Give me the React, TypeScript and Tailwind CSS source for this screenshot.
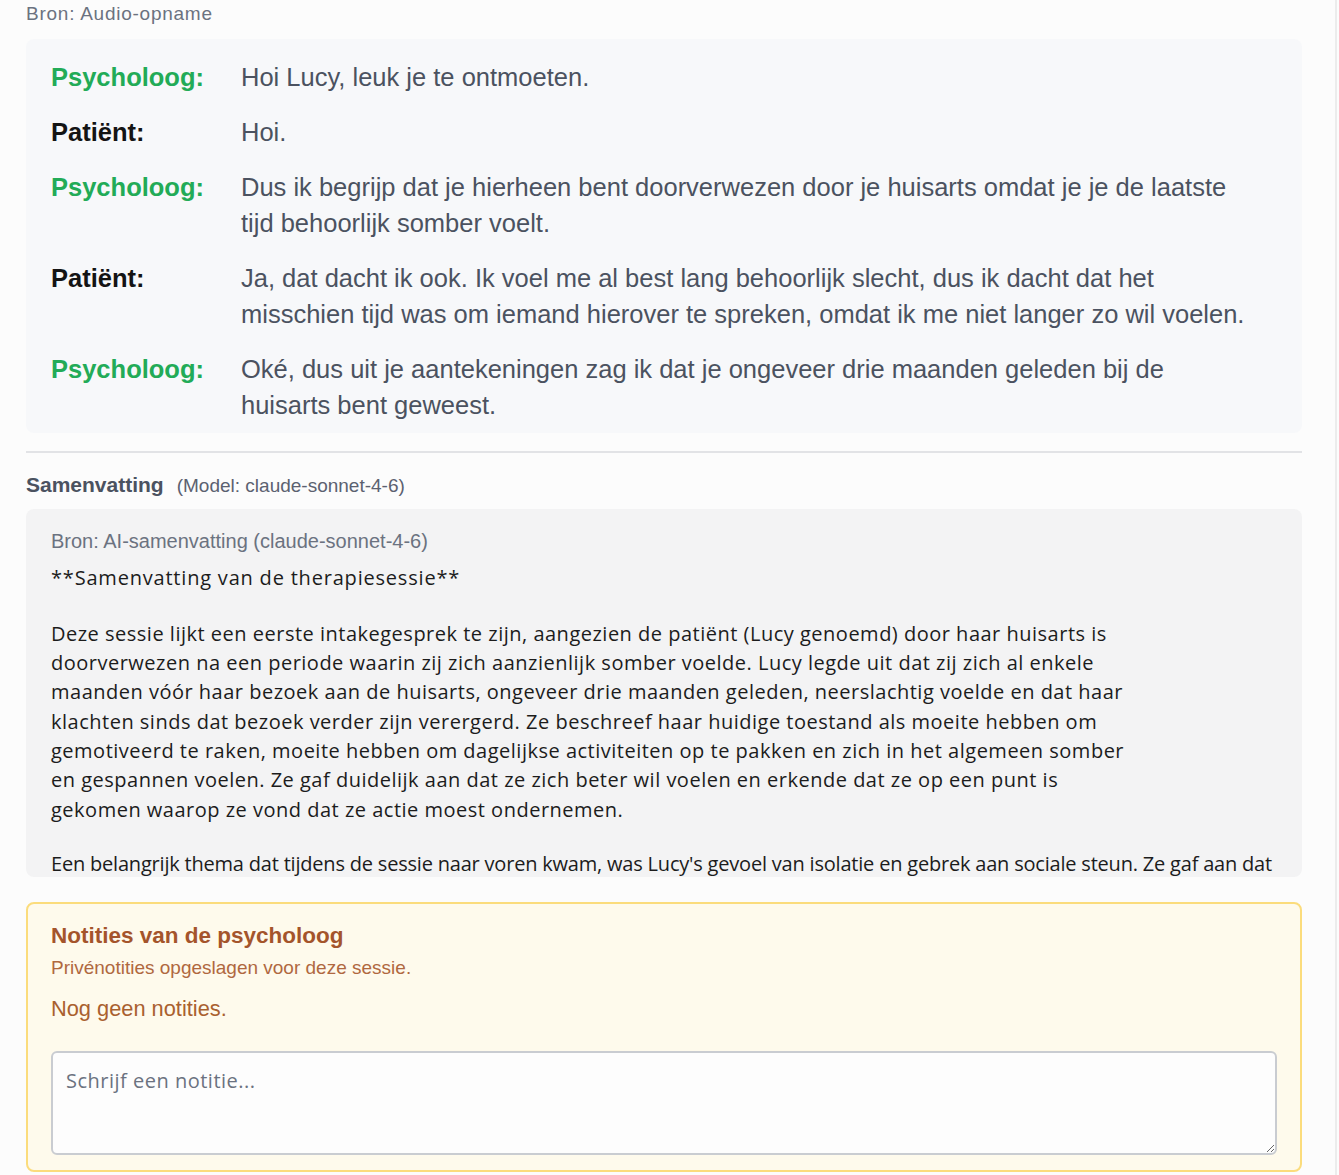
import React from "react";

const sans = { fontFamily: '"Liberation Sans", Arial, sans-serif' };

type Entry = { who: "Psycholoog" | "Patiënt"; lines: string[] };

const transcript: Entry[] = [
  { who: "Psycholoog", lines: ["Hoi Lucy, leuk je te ontmoeten."] },
  { who: "Patiënt", lines: ["Hoi."] },
  {
    who: "Psycholoog",
    lines: [
      "Dus ik begrijp dat je hierheen bent doorverwezen door je huisarts omdat je je de laatste",
      "tijd behoorlijk somber voelt.",
    ],
  },
  {
    who: "Patiënt",
    lines: [
      "Ja, dat dacht ik ook. Ik voel me al best lang behoorlijk slecht, dus ik dacht dat het",
      "misschien tijd was om iemand hierover te spreken, omdat ik me niet langer zo wil voelen.",
    ],
  },
  {
    who: "Psycholoog",
    lines: [
      "Oké, dus uit je aantekeningen zag ik dat je ongeveer drie maanden geleden bij de",
      "huisarts bent geweest.",
    ],
  },
];

const para1 = [
  "Deze sessie lijkt een eerste intakegesprek te zijn, aangezien de patiënt (Lucy genoemd) door haar huisarts is",
  "doorverwezen na een periode waarin zij zich aanzienlijk somber voelde. Lucy legde uit dat zij zich al enkele",
  "maanden vóór haar bezoek aan de huisarts, ongeveer drie maanden geleden, neerslachtig voelde en dat haar",
  "klachten sinds dat bezoek verder zijn verergerd. Ze beschreef haar huidige toestand als moeite hebben om",
  "gemotiveerd te raken, moeite hebben om dagelijkse activiteiten op te pakken en zich in het algemeen somber",
  "en gespannen voelen. Ze gaf duidelijk aan dat ze zich beter wil voelen en erkende dat ze op een punt is",
  "gekomen waarop ze vond dat ze actie moest ondernemen.",
];

const para2 = [
  "Een belangrijk thema dat tijdens de sessie naar voren kwam, was Lucy's gevoel van isolatie en gebrek aan sociale steun. Ze gaf aan dat",
];

const summaryFont = { fontFamily: '"Open Sans", Lato, sans-serif' };

export default function App() {
  return (
    <div className="min-h-[1175px] w-[1339px] bg-[#fcfcfc]" style={sans}>
      <div className="w-[1337px] border-r-2 border-[#ececec] min-h-[1175px]">
        <div className="pl-[26px] pr-[33px]">
          <div className="pt-[2px] text-[19px] tracking-[0.75px] leading-[24px] text-[#6b7280]">Bron: Audio-opname</div>

          <div className="mt-[13px] rounded-lg bg-[#f7f8fa] px-[25px] pt-[20px] pb-[10px]">
            <div className="flex flex-col gap-[19px]">
              {transcript.map((e, i) => (
                <div key={i} className="flex text-[25.5px] leading-[36px]">
                  <div
                    className={
                      "w-[190px] shrink-0 font-bold " +
                      (e.who === "Psycholoog" ? "text-[#22ab57]" : "text-[#141414]")
                    }
                  >
                    {e.who}:
                  </div>
                  <div className="text-[#4b5260]">
                    {e.lines.map((l, j) => (
                      <div key={j} className="whitespace-nowrap">
                        {l}
                      </div>
                    ))}
                  </div>
                </div>
              ))}
            </div>
          </div>

          <div className="mt-[18px] h-[2px] bg-[#e2e3e6]" />

          <div className="mt-[18px] flex items-baseline gap-[13px]">
            <span className="text-[21px] leading-[28px] font-bold text-[#4b5260]">Samenvatting</span>
            <span className="text-[19px] text-[#5b6170]">(Model: claude-sonnet-4-6)</span>
          </div>

          <div className="mt-[8px] h-[368px] overflow-hidden rounded-lg bg-[#f3f3f4] px-[25px] pt-[20px]">
            <div className="text-[20px] leading-[24px] text-[#6b7280]">Bron: AI-samenvatting (claude-sonnet-4-6)</div>
            <div className="mt-[10px] text-[20px] leading-[29.3px] text-[#1c1c1c]" style={summaryFont}>
              <div className="whitespace-nowrap tracking-[0.8px]">**Samenvatting van de therapiesessie**</div>
              <div className="mt-[27px] tracking-[0.5px]">
                {para1.map((l, i) => (
                  <div key={i} className="whitespace-nowrap">
                    {l}
                  </div>
                ))}
              </div>
              <div className="mt-[25px] tracking-[-0.2px]">
                {para2.map((l, i) => (
                  <div key={i} className="whitespace-nowrap">
                    {l}
                  </div>
                ))}
              </div>
            </div>
          </div>

          <div className="mt-[25px] rounded-lg border-2 border-[#fbdc7c] bg-[#fefaec] px-[23px] pt-[18px] pb-[15px]">
            <div className="text-[22.5px] leading-[28px] font-bold text-[#a4542b]">Notities van de psycholoog</div>
            <div className="mt-[6px] text-[19px] leading-[24px] text-[#b0683f]">Privénotities opgeslagen voor deze sessie.</div>
            <div className="mt-[15px] text-[21.8px] leading-[28px] text-[#a9602f]">Nog geen notities.</div>
            <textarea
              className="mt-[28px] block h-[104px] w-full rounded-md border-2 border-[#c9ccd1] bg-[#fdfdfd] px-[13px] py-[14px] text-[20px] leading-[28px] tracking-[0.5px] text-[#333] placeholder:text-[#6b7280] outline-none"
              style={summaryFont}
              placeholder="Schrijf een notitie..."
            />
          </div>
        </div>
      </div>
    </div>
  );
}
